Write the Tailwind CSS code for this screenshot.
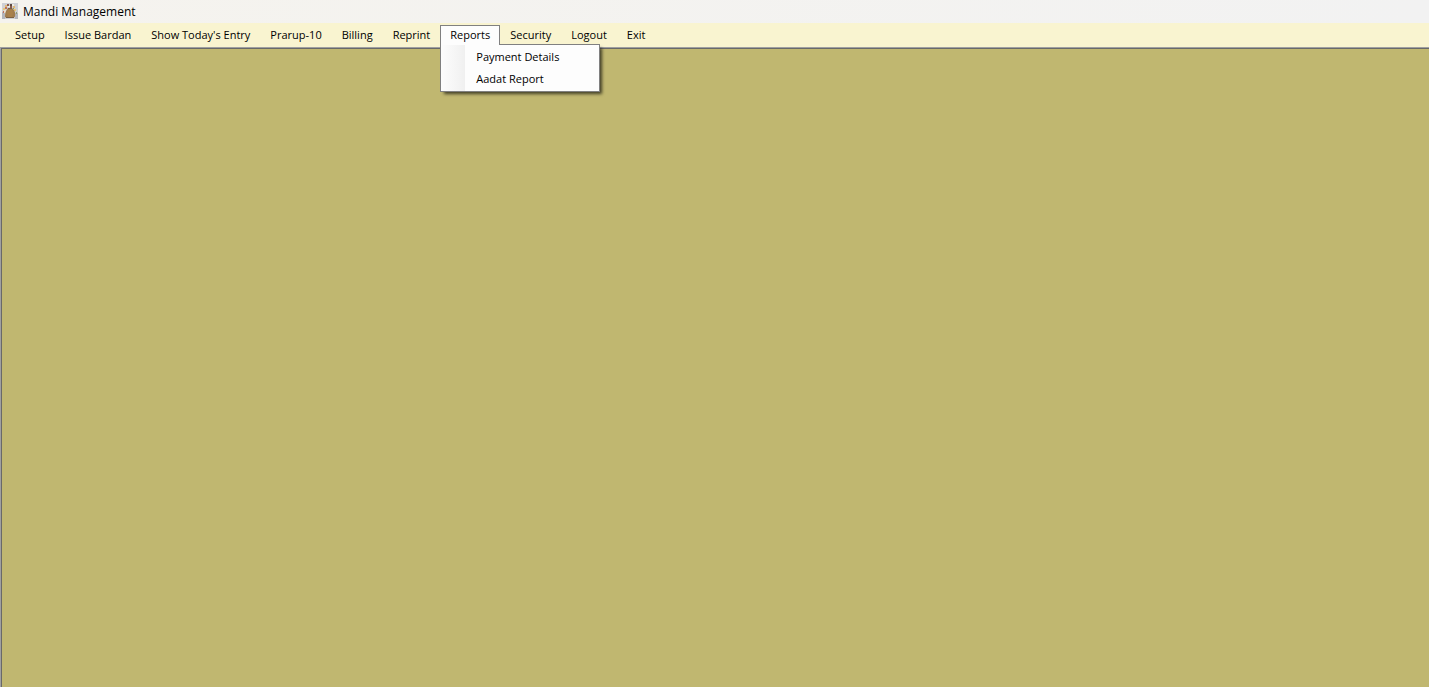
<!DOCTYPE html>
<html lang="en">
<head>
<meta charset="utf-8">
<title>Mandi Management</title>
<script src="https://cdn.jsdelivr.net/npm/@tailwindcss/browser@4"></script>
</head>
<body class="flex min-h-screen flex-col bg-[#c0b770] font-['Open_Sans','Noto_Sans',sans-serif] text-[11px] leading-4 text-black">
  <header class="flex h-[23px] items-center gap-[5px] bg-linear-to-r from-[#f5f3ee] to-[#f2f2f2] pl-[2px]">
    <svg class="mb-px size-4 shrink-0" viewBox="0 0 16 16" aria-hidden="true">
      <rect width="16" height="16" fill="#cfd0d4"/>
      <path d="M0 9h3v7H0zM13 10h3v6h-3z" fill="#b3b5bc"/>
      <path d="M5 1h2v2H5zM8 3h2v2H8z" fill="#8a5a4c"/>
      <path d="M8 1h2v2H8z" fill="#5d4a40"/>
      <path d="M10 1h2v2h-2zM6 3h2v1H6z" fill="#f1ece2"/>
      <path d="M3 2h2v2H3zM11 3h2v2h-2z" fill="#e2b873"/>
      <path d="M1 5h2v2H1zM12 6h2v2h-2z" fill="#e6c877"/>
      <path d="M3 4h2v2H3zM1 8h1v2H1z" fill="#c0705a"/>
      <path d="M11 5h1v1h-1zM14 9h1v2h-1z" fill="#8a9c70"/>
      <path d="M2 7h2v3H2zM12 8h1v2h-1z" fill="#e9dfcf"/>
      <path d="M6 5h4l1.500 1.500c1.500 1.500 2 4 1.500 7L11.500 15h-7L3 14c0-3 .5-6 2-7.500z" fill="#a07c4e"/>
      <path d="M6 7h4l1 3-1 4H6l-1-4z" fill="#a9814c"/>
      <path d="M4 14h8v1H4zM6 5h4v1H6z" fill="#7d6040"/>
    </svg>
    <h1 class="text-[12px]">Mandi Management</h1>
  </header>

  <nav class="flex h-6 items-stretch bg-[#f9f4d0] pt-[2px] pl-[5px]" aria-label="Main menu">
    <button type="button" class="px-[10px] pb-[2px]">Setup</button>
    <button type="button" class="px-[10px] pb-[2px]">Issue Bardan</button>
    <button type="button" class="px-[10px] pb-[2px]">Show Today's Entry</button>
    <button type="button" class="px-[10px] pb-[2px]">Prarup-10</button>
    <button type="button" class="px-[10px] pb-[2px]">Billing</button>
    <button type="button" class="px-[10px] pb-[2px]">Reprint</button>
    <div class="relative flex">
      <button type="button" aria-haspopup="true" aria-expanded="true" class="relative z-20 mb-[2px] h-5 border border-b-0 border-[#808080] bg-[#fdfdfd] px-[9px] pb-px">Reports</button>
      <div role="menu" class="absolute top-[19px] left-0 z-10 flex w-40 flex-col border border-[#808080] bg-[#fdfdfd] bg-linear-to-r from-[#fdfdfd] to-[#f0f0f0] bg-[length:24px_100%] bg-no-repeat py-px shadow-[3px_3px_3px_-1px_rgba(0,0,0,0.65)]">
        <button type="button" role="menuitem" class="h-[22px] pl-[35px] text-left">Payment Details</button>
        <button type="button" role="menuitem" class="h-[22px] pl-[35px] text-left">Aadat Report</button>
      </div>
    </div>
    <button type="button" class="px-[10px] pb-[2px]">Security</button>
    <button type="button" class="px-[10px] pb-[2px]">Logout</button>
    <button type="button" class="px-[10px] pb-[2px]">Exit</button>
  </nav>

  <main class="flex grow border-t border-l border-[#a0a0a0]">
    <div class="grow border-t border-l border-[#696969] bg-[#c0b770]"></div>
  </main>
</body>
</html>
